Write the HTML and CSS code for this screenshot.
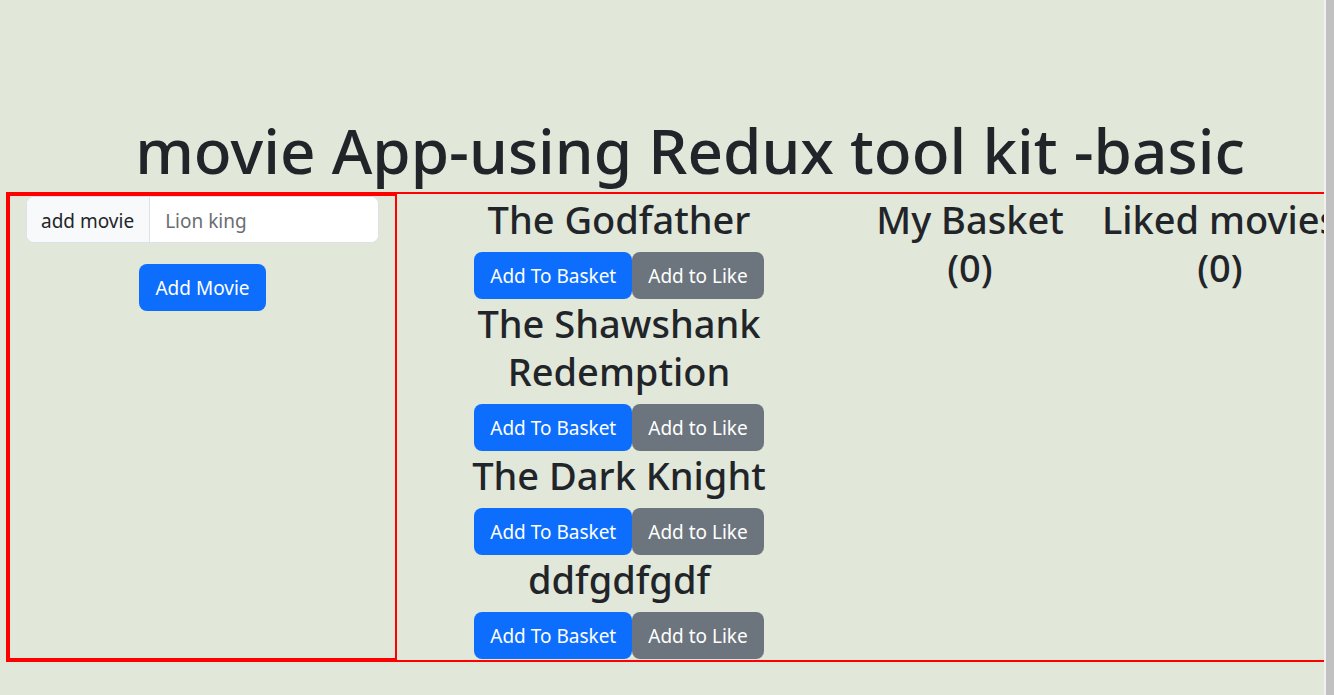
FILE: index.html
```html
<!DOCTYPE html>
<html lang="en">
<head>
<meta charset="utf-8">
<meta name="viewport" content="width=device-width, initial-scale=1">
<title>Movie App</title>
<link rel="stylesheet" href="styles.css">
</head>
<body>
<div class="viewport">
  <main class="page">
    <div class="content">
      <h1 class="title">movie App-using Redux tool kit -basic</h1>
      <div class="board">
        <form class="add-form">
          <div class="input-group">
            <label class="input-label" for="movie">add movie</label>
            <input class="input" id="movie" type="text" placeholder="Lion king">
          </div>
          <button class="btn btn-primary" type="button">Add Movie</button>
        </form>
        <section class="movies">
          <article class="movie">
            <h2 class="heading">The Godfather</h2>
            <div class="actions"><button class="btn btn-primary" type="button">Add To Basket</button><button class="btn btn-secondary" type="button">Add to Like</button></div>
          </article>
          <article class="movie">
            <h2 class="heading">The Shawshank Redemption</h2>
            <div class="actions"><button class="btn btn-primary" type="button">Add To Basket</button><button class="btn btn-secondary" type="button">Add to Like</button></div>
          </article>
          <article class="movie">
            <h2 class="heading">The Dark Knight</h2>
            <div class="actions"><button class="btn btn-primary" type="button">Add To Basket</button><button class="btn btn-secondary" type="button">Add to Like</button></div>
          </article>
          <article class="movie">
            <h2 class="heading">ddfgdfgdf</h2>
            <div class="actions"><button class="btn btn-primary" type="button">Add To Basket</button><button class="btn btn-secondary" type="button">Add to Like</button></div>
          </article>
        </section>
        <section class="summary">
          <h2 class="heading">My Basket (0)</h2>
        </section>
        <section class="summary">
          <h2 class="heading">Liked movies (0)</h2>
        </section>
      </div>
    </div>
  </main>
  <div class="scrollbar"></div>
</div>
</body>
</html>
```
FILE: styles.css
```css
* {
  box-sizing: border-box;
}

body {
  margin: 0;
  background: #e1e7d9;
  color: #212529;
  font-family: "Noto Sans", "Open Sans", sans-serif;
  font-size: 19px;
  line-height: 30px;
}

.viewport {
  display: flex;
  min-height: 100vh;
}

.page {
  flex: 1;
  min-width: 0;
  overflow: hidden;
  padding: 110px 0 32px 6px;
}

.content {
  width: calc(100% + 50px);
}

.scrollbar {
  flex: none;
  width: 10px;
  border-left: 2px solid #f0f0f0;
  background: #c1c1c1;
}

.title {
  margin: 0 0 2px;
  font-size: 62px;
  font-weight: 500;
  line-height: 80px;
  text-align: center;
}

.board {
  display: grid;
  grid-template-columns: minmax(0, 389fr) minmax(0, 444fr) minmax(0, 250fr) minmax(0, 250fr);
  padding-right: 31px;
  border: 2px solid red;
}

.add-form {
  display: flex;
  flex-direction: column;
  align-items: center;
  gap: 21px;
  padding: 0 16px;
  border: 2px solid red;
}

.input-group {
  display: flex;
  width: 100%;
  border: 1px solid #dee2e6;
  border-radius: 8px;
  overflow: hidden;
  background: #fff;
}

.input-label {
  padding: 9px 15px 6px 14px;
  border-right: 1px solid #dee2e6;
  background: #f8f9fa;
  white-space: nowrap;
}

.input {
  flex: 1;
  width: 100%;
  min-width: 0;
  padding: 9px 15px 6px;
  border: 0;
  background: #fff;
  color: inherit;
  font: inherit;
}

.input::placeholder {
  color: #6a6e72;
  opacity: 1;
}

.btn {
  padding: 9px 16px 7px;
  border: 0;
  border-radius: 8px;
  color: #fff;
  font: inherit;
  line-height: 31px;
  white-space: nowrap;
}

.btn-primary {
  background: #0d6efd;
}

.btn-secondary {
  background: #6c757d;
}

.movies {
  padding: 1px 64px;
}

.heading {
  margin: 0 0 9px;
  font-size: 38px;
  font-weight: 500;
  line-height: 48px;
  text-align: center;
}

.actions {
  display: flex;
  justify-content: center;
}

.summary {
  padding: 1px 0 0 8px;
}
```
